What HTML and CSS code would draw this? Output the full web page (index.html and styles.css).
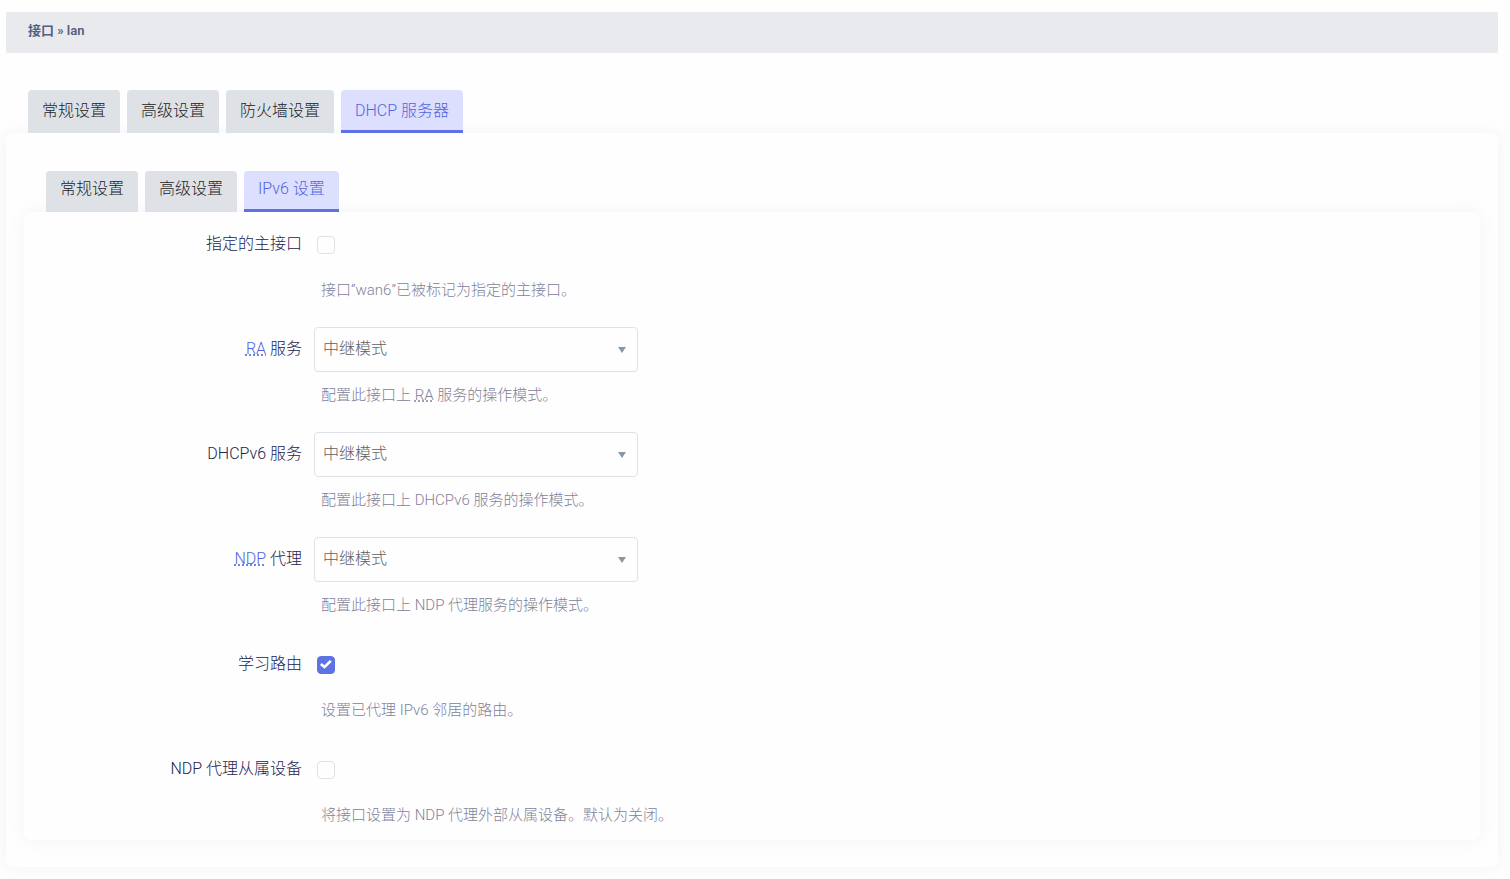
FILE: index.html
```html
<!DOCTYPE html>
<html lang="zh-CN">
<head>
    <meta charset="UTF-8">
    <meta name="viewport" content="width=device-width, initial-scale=1.0">
    <title>接口 » lan</title>
    <link rel="stylesheet" href="styles.css">
</head>
<body>
    <h4 class="title">接口 » lan</h4>

    <ul class="tabs">
        <li><a href="#general">常规设置</a></li>
        <li><a href="#advanced">高级设置</a></li>
        <li><a href="#firewall">防火墙设置</a></li>
        <li class="active"><a href="#dhcp">DHCP 服务器</a></li>
    </ul>

    <main class="panel" id="dhcp">
        <ul class="tabs tabs-inner">
            <li><a href="#dhcp-general">常规设置</a></li>
            <li><a href="#dhcp-advanced">高级设置</a></li>
            <li class="active"><a href="#ipv6">IPv6 设置</a></li>
        </ul>

        <form class="panel panel-inner" id="ipv6">
            <div class="row">
                <label class="name" for="master">指定的主接口</label>
                <div class="field">
                    <div class="control"><input type="checkbox" id="master"></div>
                    <div class="description">接口“wan6”已被标记为指定的主接口。</div>
                </div>
            </div>

            <div class="row">
                <label class="name" for="ra"><a href="#ra"><abbr title="Router Advertisement">RA</abbr></a> 服务</label>
                <div class="field">
                    <div class="control select">
                        <select id="ra">
                            <option>已禁用</option>
                            <option>服务器模式</option>
                            <option selected>中继模式</option>
                            <option>混合模式</option>
                        </select>
                    </div>
                    <div class="description">配置此接口上 <abbr title="Router Advertisement">RA</abbr> 服务的操作模式。</div>
                </div>
            </div>

            <div class="row">
                <label class="name" for="dhcpv6">DHCPv6 服务</label>
                <div class="field">
                    <div class="control select">
                        <select id="dhcpv6">
                            <option>已禁用</option>
                            <option>服务器模式</option>
                            <option selected>中继模式</option>
                            <option>混合模式</option>
                        </select>
                    </div>
                    <div class="description">配置此接口上 DHCPv6 服务的操作模式。</div>
                </div>
            </div>

            <div class="row">
                <label class="name" for="ndp"><a href="#ndp"><abbr title="Neighbour Discovery Protocol">NDP</abbr></a> 代理</label>
                <div class="field">
                    <div class="control select">
                        <select id="ndp">
                            <option>已禁用</option>
                            <option selected>中继模式</option>
                            <option>混合模式</option>
                        </select>
                    </div>
                    <div class="description">配置此接口上 NDP 代理服务的操作模式。</div>
                </div>
            </div>

            <div class="row">
                <label class="name" for="learn">学习路由</label>
                <div class="field">
                    <div class="control"><input type="checkbox" id="learn" checked></div>
                    <div class="description">设置已代理 IPv6 邻居的路由。</div>
                </div>
            </div>

            <div class="row">
                <label class="name" for="slave">NDP 代理从属设备</label>
                <div class="field">
                    <div class="control"><input type="checkbox" id="slave"></div>
                    <div class="description">将接口设置为 NDP 代理外部从属设备。默认为关闭。</div>
                </div>
            </div>
        </form>
    </main>
</body>
</html>
```

FILE: styles.css
```css
* {
    box-sizing: border-box;
}
body {
    margin: 0;
    padding: 12px 12px 12px 6px;
    background-color: #fefefe;
    color: #23234e;
    font-family: Roboto, "Noto Sans CJK SC", sans-serif;
    font-size: 16px;
    font-weight: 300;
    line-height: 24px;
}
.title {
    margin: 0 0 37px;
    padding: 9px 22px 12px;
    border-radius: 2px;
    background-color: #e9eaed;
    color: #525f7f;
    font-size: 13px;
    font-weight: 600;
    line-height: 20px;
}
.tabs {
    display: flex;
    gap: 7px;
    margin: 0;
    padding: 0 22px;
    list-style: none;
}
.tabs a {
    display: block;
    padding: 9px 14px 7px;
    border-bottom: 3px solid #dee2e7;
    border-radius: 4px 4px 0 0;
    background-color: #dee2e7;
    color: #222326;
    text-decoration: none;
}
.tabs .active a {
    border-color: #5e72e4;
    background-color: #dddfff;
    color: #5265e0;
}
.tabs-inner a {
    padding: 6px 14px 8px;
}
.panel {
    padding: 38px 18px 27px;
    border-radius: 6px;
    background-color: #fefefe;
    box-shadow: 0 0 16px rgba(136, 152, 170, 0.1);
}
.panel-inner {
    display: flex;
    flex-direction: column;
    gap: 26px;
    padding: 10px 0 14px;
}
.row {
    display: flex;
    gap: 12px;
}
.name {
    flex: 0 0 278px;
    padding-top: 10px;
    text-align: right;
}
.name a {
    color: #5265e0;
    text-decoration: none;
}
abbr {
    text-decoration: underline dotted;
}
.field {
    flex: 1;
}
.control {
    display: flex;
    align-items: center;
    height: 45px;
}
.select {
    position: relative;
    max-width: 324px;
}
.select::after {
    content: "";
    position: absolute;
    right: 12px;
    border: 4px solid transparent;
    border-top: 6px solid #8898aa;
    border-bottom: 0;
    pointer-events: none;
}
select {
    appearance: none;
    width: 100%;
    height: 45px;
    padding: 0 8px 1px;
    border: 1px solid #dee2e6;
    border-radius: 4px;
    background-color: #fefefe;
    color: #606060;
    font: inherit;
}
input[type="checkbox"] {
    appearance: none;
    display: grid;
    place-items: center;
    width: 18px;
    height: 18px;
    margin: 0 3px;
    border: 1px solid #dee2e6;
    border-radius: 4px;
}
input[type="checkbox"]:checked {
    border-color: #5e72e4;
    background-color: #5e72e4;
}
input[type="checkbox"]:checked::before {
    content: "";
    width: 12px;
    height: 10px;
    background-color: #fff;
    clip-path: polygon(0 54%, 15% 36%, 36% 58%, 82% 4%, 98% 22%, 38% 92%);
}
.description {
    margin-top: 12px;
    padding-left: 7px;
    color: #82829a;
    font-size: 15px;
    line-height: 22px;
}
```
